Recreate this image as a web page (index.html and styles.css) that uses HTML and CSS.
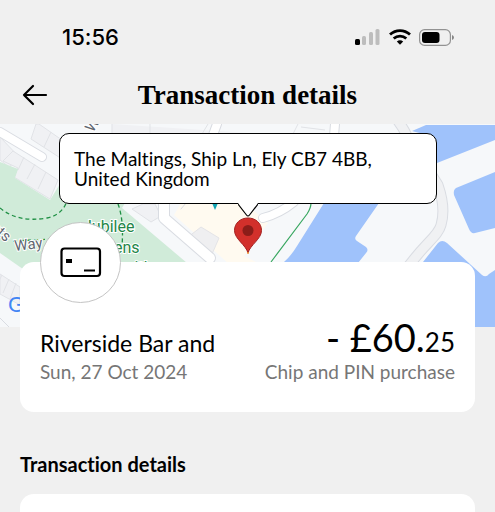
FILE: index.html
```html
<!DOCTYPE html>
<html lang="en">
<head>
  <meta charset="UTF-8" />
  <meta name="viewport" content="width=device-width, initial-scale=1.0"/>
  <title>Transaction details</title>
  <link rel="stylesheet" href="styles.css">
</head>
<body>

  <!-- Status bar -->
  <div class="status-bar">
    <time class="clock">15:56</time>
    <div class="status-icons">
      <svg width="26" height="16" viewBox="0 0 26 16" aria-label="Signal">
        <rect x="0" y="10" width="5" height="6" rx="1.5" fill="#000"/>
        <rect x="7" y="7" width="4" height="9" rx="1.5" fill="#bdbdbd"/>
        <rect x="14" y="3" width="4" height="13" rx="1.5" fill="#bdbdbd"/>
        <rect x="20.500" y="0" width="4" height="16" rx="1.500" fill="#bdbdbd"/>
      </svg>
      <svg width="22" height="16" viewBox="0 0 22 16" aria-label="Wi-Fi">
        <g fill="none" stroke="#000" stroke-width="2.8">
          <path d="M1 5.600C6.800 .2 15.200 .2 21 5.600"/>
          <path d="M4.700 9.500C8.300 6.200 13.700 6.200 17.300 9.500"/>
        </g>
        <path d="M7.800 12.500Q11 10 14.200 12.500L11 15.800Z"/>
      </svg>
      <svg width="36" height="17" viewBox="0 0 36 17" aria-label="Battery">
        <rect x=".6" y=".6" width="30.800" height="15.800" rx="5" fill="none" stroke="#929292" stroke-width="1.200"/>
        <rect x="3" y="3" width="17.500" height="11" rx="3" fill="#000"/>
        <path d="M33 6v5q2-.8 2-2.500T33 6Z" fill="#858585"/>
      </svg>
    </div>
  </div>

  <!-- Header -->
  <header class="top-bar">
    <button type="button" class="back" aria-label="Back">
      <svg width="26" height="22" viewBox="0 0 26 22" fill="none" stroke="#000" stroke-width="2.200" stroke-linecap="round" stroke-linejoin="round">
        <path d="M24 11H2M11 2L2 11l9 9"/>
      </svg>
    </button>
    <h1>Transaction details</h1>
  </header>

  <main>
    <!-- Map -->
    <section class="map" aria-label="Map">
      <svg class="map-art" viewBox="0 0 495 203" preserveAspectRatio="xMidYMid slice">
        <rect width="495" height="203" fill="#f6f8fa"/>

        <!-- buildings -->
        <g fill="#f0f1f4" stroke="#e1e3e7">
          <path d="M0 13L20 34L9 43L0 36Z"/>
          <path d="M13 27L58 56L50 75L14 53L18 44L3 37Z"/>
          <path d="M24 33L18 46M35 40L27 55M46 48L38 65"/>
          <path d="M39 0L72 23L65 37L31 15L36 0Z"/>
          <path d="M51 8L44 23"/>
          <path d="M143 80H155L161 92L151 98L132 85Z"/>
          <path d="M0 150L20 163V181L0 170Z"/>
          <path d="M2 151L-3 161M9 155L3 169M16 159L10 175"/>
          <path d="M112 0V10H262M150 0V10M202 10L208 0M298 0L293 10M325 6L301 3"/>
        </g>

        <!-- park -->
        <path d="M0 38L18 45L15 54L50 76L60 60L96 50L125 79L122 84L187 139V152H34L20 143L0 129Z" fill="#d0ebd9"/>
        <g fill="none" stroke="#1f9044" stroke-width="1.300" stroke-dasharray="4 3">
          <path d="M0 84Q18 99 47 94C59 92 65 83 66 79"/>
          <path d="M118 80Q124 96 122 122"/>
          <path d="M13 117L51 115"/>
        </g>

        <!-- venue area -->
        <path d="M181 79H245L268 99L244 132L260 140H229L174 91Z" fill="#fffaf0"/>
        <path d="M201 103L219 114L209 137L183 117Z" fill="#efeff1" stroke="#e4e4e7"/>

        <!-- roads -->
        <g fill="none" stroke-linecap="round" stroke-linejoin="round">
          <g stroke="#d9dce2">
            <path d="M0 8L42 33" stroke-width="10"/>
            <path d="M164 80V94L210 134" stroke-width="12"/>
            <path d="M263 94C275 91 283 87 294 78" stroke-width="10"/>
            <path d="M335 0L334 12M217 0L213 11" stroke-width="10"/>
            <path d="M398 -3Q404 5 407 12L438 61Q446 84 441 101C438 113 423 120 402 151" stroke-width="11"/>
          </g>
          <g stroke="#fff">
            <path d="M0 8L42 33" stroke-width="8"/>
            <path d="M164 80V94L210 134" stroke-width="10"/>
            <path d="M263 94C275 91 283 87 294 78" stroke-width="8"/>
            <path d="M335 0L334 12M217 0L213 11" stroke-width="8"/>
          </g>
          <path d="M398 -3Q404 5 407 12L438 61Q446 84 441 101C438 113 423 120 402 151" stroke="#f0f1f3" stroke-width="9"/>
          <path d="M0 194L10 204M186 79L181 85" stroke="#d9dce2"/>
        </g>

        <!-- river -->
        <g fill="#9fc2fb">
          <path d="M412 7L426 1H495V16L437 39V21Q437 12 427 11Z"/>
          <path d="M456 64L495 48V104L475 109Q471 110 469 105L454 71Q453 66 456 64Z"/>
          <path d="M324 79H379L356 112Q354 115 357 117L366 123Q369 126 366 129L358 139V152H274L284 138Q291 132 297 122Z"/>
          <path d="M423 138L438 119Q442 115 447 119L482 151Q486 154 489 150L495 146V203H475V152H415Z"/>
        </g>
        <path d="M311 79Q311 84 307 90L271 138" fill="none" stroke="#38a760" stroke-width="1.200"/>
        <path d="M212 79H218L215 86Z" fill="#12a4b4"/>

        <!-- map labels -->
        <g class="map-label park-label">
          <text x="83" y="108">Jubilee</text>
          <text x="80" y="129">Gardens</text>
          <text x="98" y="149">Ely with</text>
        </g>
        <g class="map-label road-label">
          <text transform="translate(-10 105) rotate(40)">nts</text>
          <text transform="translate(15 127) rotate(-7)">Way</text>
          <text transform="translate(93 9) rotate(-58)">W</text>
        </g>
        <text class="map-brand" x="8" y="188">Google</text>
      </svg>

      <div class="callout">
        <p>The Maltings, Ship Ln, Ely CB7 4BB,<br>United Kingdom</p>
        <svg class="callout-tail" width="20" height="14" viewBox="0 0 20 14">
          <path d="M0 0L8.500 12Q10 14 11.500 12L20 0Z" fill="#fff"/>
          <path d="M0 1L8.500 12Q10 14 11.500 12L20 1" fill="none" stroke="#000" stroke-width="1.200"/>
        </svg>
        <svg class="pin" width="30" height="38" viewBox="0 0 30 38">
          <path d="M15 36C13 28 1.500 22 1.500 13.500C1.500 6 7.500 1 15 1S28.500 6 28.500 13.500C28.500 22 17 28 15 36Z" fill="#d2302b" stroke="#a32020"/>
          <circle cx="15" cy="13.500" r="5.500" fill="#8b1d19"/>
          <circle cx="15" cy="36" r="1" fill="#f29a38"/>
        </svg>
      </div>
    </section>

    <!-- Transaction summary -->
    <section class="card summary">
      <div class="badge">
        <svg width="42" height="31" viewBox="0 0 42 31">
          <rect x="1.500" y="1.500" width="38.500" height="27.500" rx="3" fill="#fff" stroke="#000" stroke-width="2.200"/>
          <rect x="6" y="12" width="6" height="4" fill="#000"/>
          <path d="M24 23.500H35" stroke="#000" stroke-width="2"/>
        </svg>
      </div>
      <div class="row">
        <h2 class="merchant">Riverside Bar and</h2>
        <p class="amount">- £60.<span class="pence">25</span></p>
      </div>
      <div class="row muted">
        <p>Sun, 27 Oct 2024</p>
        <p>Chip and PIN purchase</p>
      </div>
    </section>

    <h2 class="section-title">Transaction details</h2>
    <section class="card details"></section>
  </main>

</body>
</html>
```
FILE: styles.css
```css
* {
  margin: 0;
  padding: 0;
  box-sizing: border-box;
}
body {
  background: #f0f0f0;
  color: #000;
  font-family: Lato, sans-serif;
  font-variant-ligatures: none;
  min-height: 100vh;
  display: flex;
  flex-direction: column;
}
main {
  flex: 1;
  display: flex;
  flex-direction: column;
}
svg {
  display: block;
}

/* Status bar */
.status-bar {
  display: flex;
  justify-content: space-between;
  align-items: center;
  height: 74px;
  padding: 0 40px 0 62px;
}
.clock {
  font-family: Inter, sans-serif;
  font-size: 22px;
  font-weight: 500;
}
.status-icons {
  display: flex;
  align-items: center;
  gap: 8px;
}

/* Header */
.top-bar {
  display: grid;
  grid-template-columns: 26px 1fr 26px;
  align-items: center;
  height: 50px;
  padding: 0 22px 8px;
}
.back {
  background: none;
  border: none;
  cursor: pointer;
}
.top-bar h1 {
  font-family: "Liberation Serif", serif;
  font-size: 27px;
  line-height: 32px;
  text-align: center;
}

/* Map */
.map {
  position: relative;
  height: 203px;
}
.map-art {
  width: 100%;
  height: 100%;
}
.map-label {
  font-family: Roboto, sans-serif;
  stroke: #fff;
  stroke-width: 2px;
  paint-order: stroke;
}
.park-label {
  font-size: 16px;
  fill: #238647;
}
.road-label {
  font-size: 15px;
  fill: #5f6670;
}
.map-brand {
  font-family: "Liberation Sans", sans-serif;
  font-size: 22px;
  fill: #4285f4;
}

.callout {
  position: absolute;
  top: 9px;
  left: 59px;
  right: 58px;
  padding: 15px 14px 14px;
  background: #fff;
  border: 1px solid #000;
  border-radius: 10px;
}
.callout p {
  font-size: 19px;
  line-height: 20px;
}
.callout-tail,
.pin {
  position: absolute;
  left: 50%;
  transform: translateX(-50%);
}
.callout-tail {
  top: 100%;
}
.pin {
  top: calc(100% + 14px);
}

/* Cards */
.card {
  background: #fff;
  border-radius: 14px;
  margin: 0 20px;
}
.summary {
  position: relative;
  margin-top: -65px;
  padding: 52px 20px 28px;
}
.badge {
  position: absolute;
  top: -40px;
  left: 20px;
  width: 81px;
  height: 81px;
  display: flex;
  justify-content: center;
  align-items: center;
  background: #fff;
  border: 1px solid #c4c4c4;
  border-radius: 50%;
}
.row {
  display: flex;
  justify-content: space-between;
  align-items: baseline;
}
.merchant {
  font-size: 23px;
  font-weight: 400;
}
.amount {
  font-size: 38px;
  line-height: 46px;
}
.pence {
  font-size: 26px;
  line-height: 26px;
}
.muted {
  color: #767676;
  font-size: 19px;
  line-height: 24px;
}
.section-title {
  padding: 40px 20px 18px;
  font-size: 20px;
  line-height: 24px;
}
.details {
  flex: 1;
  border-radius: 14px 14px 0 0;
}
```
